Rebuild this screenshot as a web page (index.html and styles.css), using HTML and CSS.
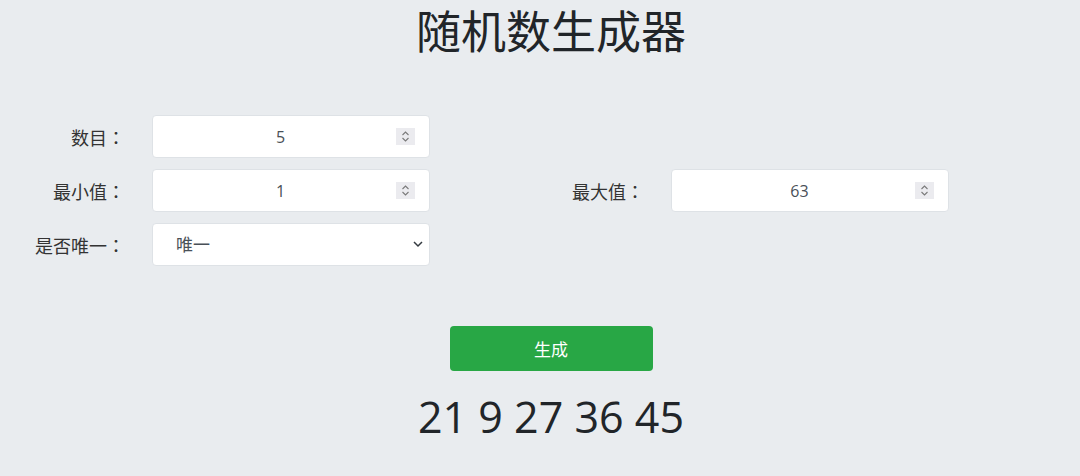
FILE: index.html
```html
<!DOCTYPE html>
<html lang="zh-CN">
<head>
    <meta charset="UTF-8">
    <meta name="viewport" content="width=device-width, initial-scale=1.0">
    <title>随机数生成器</title>
    <link rel="stylesheet" href="styles.css">
</head>
<body>
    <h1 class="title">随机数生成器</h1>

    <form class="form" id="genForm">
        <label class="label" for="count">数目<span class="colon">：</span></label>
        <div class="field">
            <input class="num" type="number" id="count" value="5">
            <span class="spin">
                <svg width="19" height="17" viewBox="0 0 19 17"><path d="M6.5 7 L9.5 4 L12.5 7 M6.5 10 L9.5 13 L12.5 10" fill="none" stroke="#7a7a7a" stroke-width="1.1"/></svg>
            </span>
        </div>
        <div class="empty"></div>
        <div class="empty"></div>

        <label class="label" for="min">最小值<span class="colon">：</span></label>
        <div class="field">
            <input class="num" type="number" id="min" value="1">
            <span class="spin">
                <svg width="19" height="17" viewBox="0 0 19 17"><path d="M6.5 7 L9.5 4 L12.5 7 M6.5 10 L9.5 13 L12.5 10" fill="none" stroke="#7a7a7a" stroke-width="1.1"/></svg>
            </span>
        </div>
        <label class="label" for="max">最大值<span class="colon">：</span></label>
        <div class="field">
            <input class="num" type="number" id="max" value="63">
            <span class="spin">
                <svg width="19" height="17" viewBox="0 0 19 17"><path d="M6.5 7 L9.5 4 L12.5 7 M6.5 10 L9.5 13 L12.5 10" fill="none" stroke="#7a7a7a" stroke-width="1.1"/></svg>
            </span>
        </div>

        <label class="label" for="unique">是否唯一<span class="colon">：</span></label>
        <div class="field field-select">
            <select class="pick" id="unique">
                <option value="1">唯一</option>
                <option value="0">不唯一</option>
            </select>
            <svg class="chev" width="10" height="7" viewBox="0 0 10 7"><path d="M1 1 L5 5 L9 1" fill="none" stroke="#343a40" stroke-width="1.5"/></svg>
        </div>
    </form>

    <div class="actions">
        <button type="button" class="btn" onclick="generate()">生成</button>
        <div class="result" id="result">21 9 27 36 45</div>
    </div>

    <script>
        function generate() {
            const count = parseInt(document.getElementById("count").value) || 0;
            const min = parseInt(document.getElementById("min").value) || 0;
            const max = parseInt(document.getElementById("max").value) || 0;
            const unique = document.getElementById("unique").value === "1";
            let nums = [];
            let tries = 0;
            while (nums.length < count && tries < 10000) {
                const n = Math.floor(Math.random() * (max - min + 1)) + min;
                if (!unique || nums.indexOf(n) === -1) nums.push(n);
                tries++;
            }
            nums.sort((a, b) => a - b);
            document.getElementById("result").textContent = nums.join(" ");
        }
    </script>
</body>
</html>
```

FILE: styles.css
```css
body {
    font-family: "Open Sans", "Noto Sans CJK SC", sans-serif;
    background-color: #e9ecef;
    color: #212529;
    margin: 0;
    padding: 0;
}

.title {
    text-align: center;
    font-size: 45px;
    font-weight: normal;
    line-height: 1.2;
    margin: 5px 0 0;
    padding-left: 22px;
}

.form {
    display: grid;
    grid-template-columns: 152px 278px 241px 278px;
    grid-auto-rows: 43px;
    row-gap: 11px;
    margin-top: 56px;
}

.label {
    display: flex;
    align-items: center;
    justify-content: flex-end;
    padding-right: 27px;
    font-size: 18px;
    color: #333;
}

.colon {
    font-family: "Noto Sans CJK JP", sans-serif;
}

.field {
    display: flex;
    align-items: center;
    background: #ffffff;
    border: 1px solid #dee2e6;
    border-radius: 4px;
    padding: 0 14px 0 12px;
}

.field-select {
    padding-right: 6px;
}

.num {
    flex: 1;
    min-width: 0;
    border: none;
    outline: none;
    background: transparent;
    font-family: inherit;
    font-size: 16px;
    color: #495057;
    text-align: center;
    -moz-appearance: textfield;
}

.num::-webkit-inner-spin-button,
.num::-webkit-outer-spin-button {
    -webkit-appearance: none;
    margin: 0;
}

.spin {
    display: flex;
    width: 19px;
    height: 17px;
    background: #ebebef;
}

.pick {
    flex: 1;
    border: none;
    outline: none;
    background: transparent;
    font-family: inherit;
    font-size: 17px;
    color: #495057;
    padding-left: 11px;
    -webkit-appearance: none;
    appearance: none;
}

.actions {
    display: flex;
    flex-direction: column;
    align-items: center;
    padding-left: 22px;
    margin-top: 60px;
}

.btn {
    width: 203px;
    height: 45px;
    background-color: #28a745;
    color: white;
    border: none;
    border-radius: 4px;
    font-family: inherit;
    font-size: 17px;
    cursor: pointer;
}

.btn:hover {
    background-color: #218838;
}

.result {
    font-size: 43px;
    line-height: 1.2;
    margin-top: 20px;
}
```
